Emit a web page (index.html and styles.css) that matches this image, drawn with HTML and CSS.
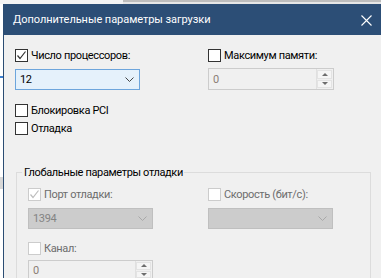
FILE: index.html
```html
<!DOCTYPE html>
<html>
<head>
<meta charset="utf-8">
<link rel="stylesheet" href="styles.css">
</head>
<body>
<div class="topstrip"><div class="top-left"></div><div class="top-right"></div></div>
<div class="main">
  <div class="behind">
    <div class="frag f1"></div>
    <div class="frag f2"></div>
    <div class="frag f3"></div>
  </div>
  <div class="dialog">
    <div class="titlebar">
      <span class="title">Дополнительные параметры загрузки</span>
      <svg class="close" width="11" height="11" viewBox="0 0 11 11"><path d="M0.5 0.5 L10.5 10.5 M10.5 0.5 L0.5 10.5" stroke="#fff" stroke-width="1.1" fill="none"/></svg>
    </div>
    <div class="content">
      <div class="grid">
        <div class="col">
          <label class="chk"><span class="box"><svg width="11" height="11" viewBox="0 0 11 11"><path d="M1.5 5.5 L4 8.5 L9.5 1.5" stroke="#333" stroke-width="1.2" fill="none"/></svg></span>Число процессоров:</label>
          <div class="combo focus"><span>12</span><svg class="chev" width="9" height="5" viewBox="0 0 9 5"><path d="M0.5 0.5 L4.5 4.5 L8.5 0.5" stroke="#444" stroke-width="1" fill="none"/></svg></div>
          <label class="chk gap13"><span class="box"></span>Блокировка PCI</label>
          <label class="chk gap3"><span class="box"></span>Отладка</label>
        </div>
        <div class="col">
          <label class="chk"><span class="box"></span>Максимум памяти:</label>
          <div class="spin spin-top"><span class="val">0</span><div class="btns"><span class="b"><i class="up"></i></span><span class="b"><i class="down"></i></span></div></div>
        </div>
      </div>
      <fieldset class="group">
        <legend>Глобальные параметры отладки</legend>
        <div class="ggrid">
          <div class="col">
            <label class="chk dis"><span class="box"><svg width="11" height="11" viewBox="0 0 11 11"><path d="M1.5 5.5 L4 8.5 L9.5 1.5" stroke="#bdbdbd" stroke-width="1.2" fill="none"/></svg></span>Порт отладки:</label>
            <div class="combo disabled"><span>1394</span><svg class="chev" width="9" height="5" viewBox="0 0 9 5"><path d="M0.5 0.5 L4.5 4.5 L8.5 0.5" stroke="#a8a8a8" stroke-width="1" fill="none"/></svg></div>
            <label class="chk dis gap13b"><span class="box"></span>Канал:</label>
            <div class="spin spin-low"><span class="val">0</span><div class="btns"><span class="b"><i class="up"></i></span><span class="b"><i class="down"></i></span></div></div>
          </div>
          <div class="col">
            <label class="chk dis"><span class="box"></span>Скорость (бит/с):</label>
            <div class="combo disabled"><span></span><svg class="chev" width="9" height="5" viewBox="0 0 9 5"><path d="M0.5 0.5 L4.5 4.5 L8.5 0.5" stroke="#a8a8a8" stroke-width="1" fill="none"/></svg></div>
          </div>
        </div>
      </fieldset>
    </div>
  </div>
</div>
</body>
</html>
```
FILE: styles.css
```css
* { box-sizing: border-box; }
html, body { margin: 0; padding: 0; overflow: hidden; }
body {
  width: 381px; height: 278px;
  font-family: Roboto, "Noto Sans", sans-serif;
  font-size: 11px;
  color: #000;
  background: #fff;
}
.topstrip { height: 4px; display: flex; }
.top-left { width: 123px; background: #f4f4f4; }
.top-right { flex: 1; background: linear-gradient(#bdbdbd 0, #bdbdbd 2px, #e6e6e6 2px); }
.main { display: flex; height: 274px; overflow: hidden; }
.behind { width: 3px; background: #fff; display: flex; flex-direction: column; flex-shrink: 0; }
.frag { width: 3px; flex-shrink: 0; }
.f1 { height: 2px; background: #3d7fd0; margin-top: 72px; }
.f2 { height: 12px; background: #d7d7d7; margin-top: 99px; }
.f3 { height: 0; }
.dialog { flex: 1; border-left: 1px solid #2b4c73; background: #f0f0f0; display: flex; flex-direction: column; overflow: hidden; }
.titlebar {
  height: 31px; flex-shrink: 0; background: #2c4e76; color: #fff;
  display: flex; align-items: center; justify-content: space-between;
  padding: 0 9px 0 9px;
}
.title { font-size: 11px; letter-spacing: -0.05px; }
.close { display: block; margin-top: 1px; }
.content { padding: 13px 0 0 11px; flex-shrink: 0; letter-spacing: -0.35px; }
.grid { display: grid; grid-template-columns: 193px 1fr; }
.col { display: flex; flex-direction: column; align-items: flex-start; }
.chk { display: flex; align-items: center; height: 15px; gap: 3px; white-space: nowrap; }
.box {
  width: 13px; height: 13px; border: 1px solid #333; background: #fff;
  display: flex; align-items: center; justify-content: center; flex-shrink: 0;
}
.box svg { display: block; }
.dis { color: #6d6d6d; }
.dis .box { border-color: #cccccc; }
.gap13 { margin-top: 13px; }
.gap3 { margin-top: 3px; }
.combo {
  width: 125px; height: 21px; margin-top: 6px; flex-shrink: 0;
  display: flex; align-items: center; justify-content: space-between;
  padding: 0 5px 0 4px; border: 1px solid #7eb4ea;
}
.combo.focus { background: #e5f1fb; border-color: #6da5dc; }
.combo.disabled { background: #cccccc; border-color: #bfbfbf; color: #838383; }
.chev { display: block; }
.spin {
  width: 126px; height: 22px; border: 1px solid #cccccc; background: #f0f0f0; flex-shrink: 0;
  display: flex; align-items: stretch; justify-content: space-between;
}
.spin-top { margin-top: 5px; }
.spin-low { margin-top: 4px; width: 125px; height: 20px; }
.val { color: #8b7e74; padding-left: 4px; display: flex; align-items: center; }
.btns { width: 17px; display: flex; flex-direction: column; border-left: 1px solid #e0e0e0; padding: 1px 1px 1px 0; gap: 1px; }
.b { flex: 1; background: #f5f5f5; border: 1px solid #e3e3e3; display: flex; align-items: center; justify-content: center; }
.b i { width: 0; height: 0; border-left: 3px solid transparent; border-right: 3px solid transparent; }
.b .up { border-bottom: 3px solid #6d6d6d; }
.b .down { border-top: 3px solid #6d6d6d; }
.group {
  margin: 29px 0 0 1px; width: 355px; border: 1px solid #dcdcdc; border-bottom: none;
  padding: 7px 0 0 11px; height: 120px;
}
.group legend { padding: 0 1px 0 2px; margin-left: -6px; color: #000; line-height: 15px; }
.ggrid { display: grid; grid-template-columns: 180px 1fr; }
.gap13b { margin-top: 12px; }
```
